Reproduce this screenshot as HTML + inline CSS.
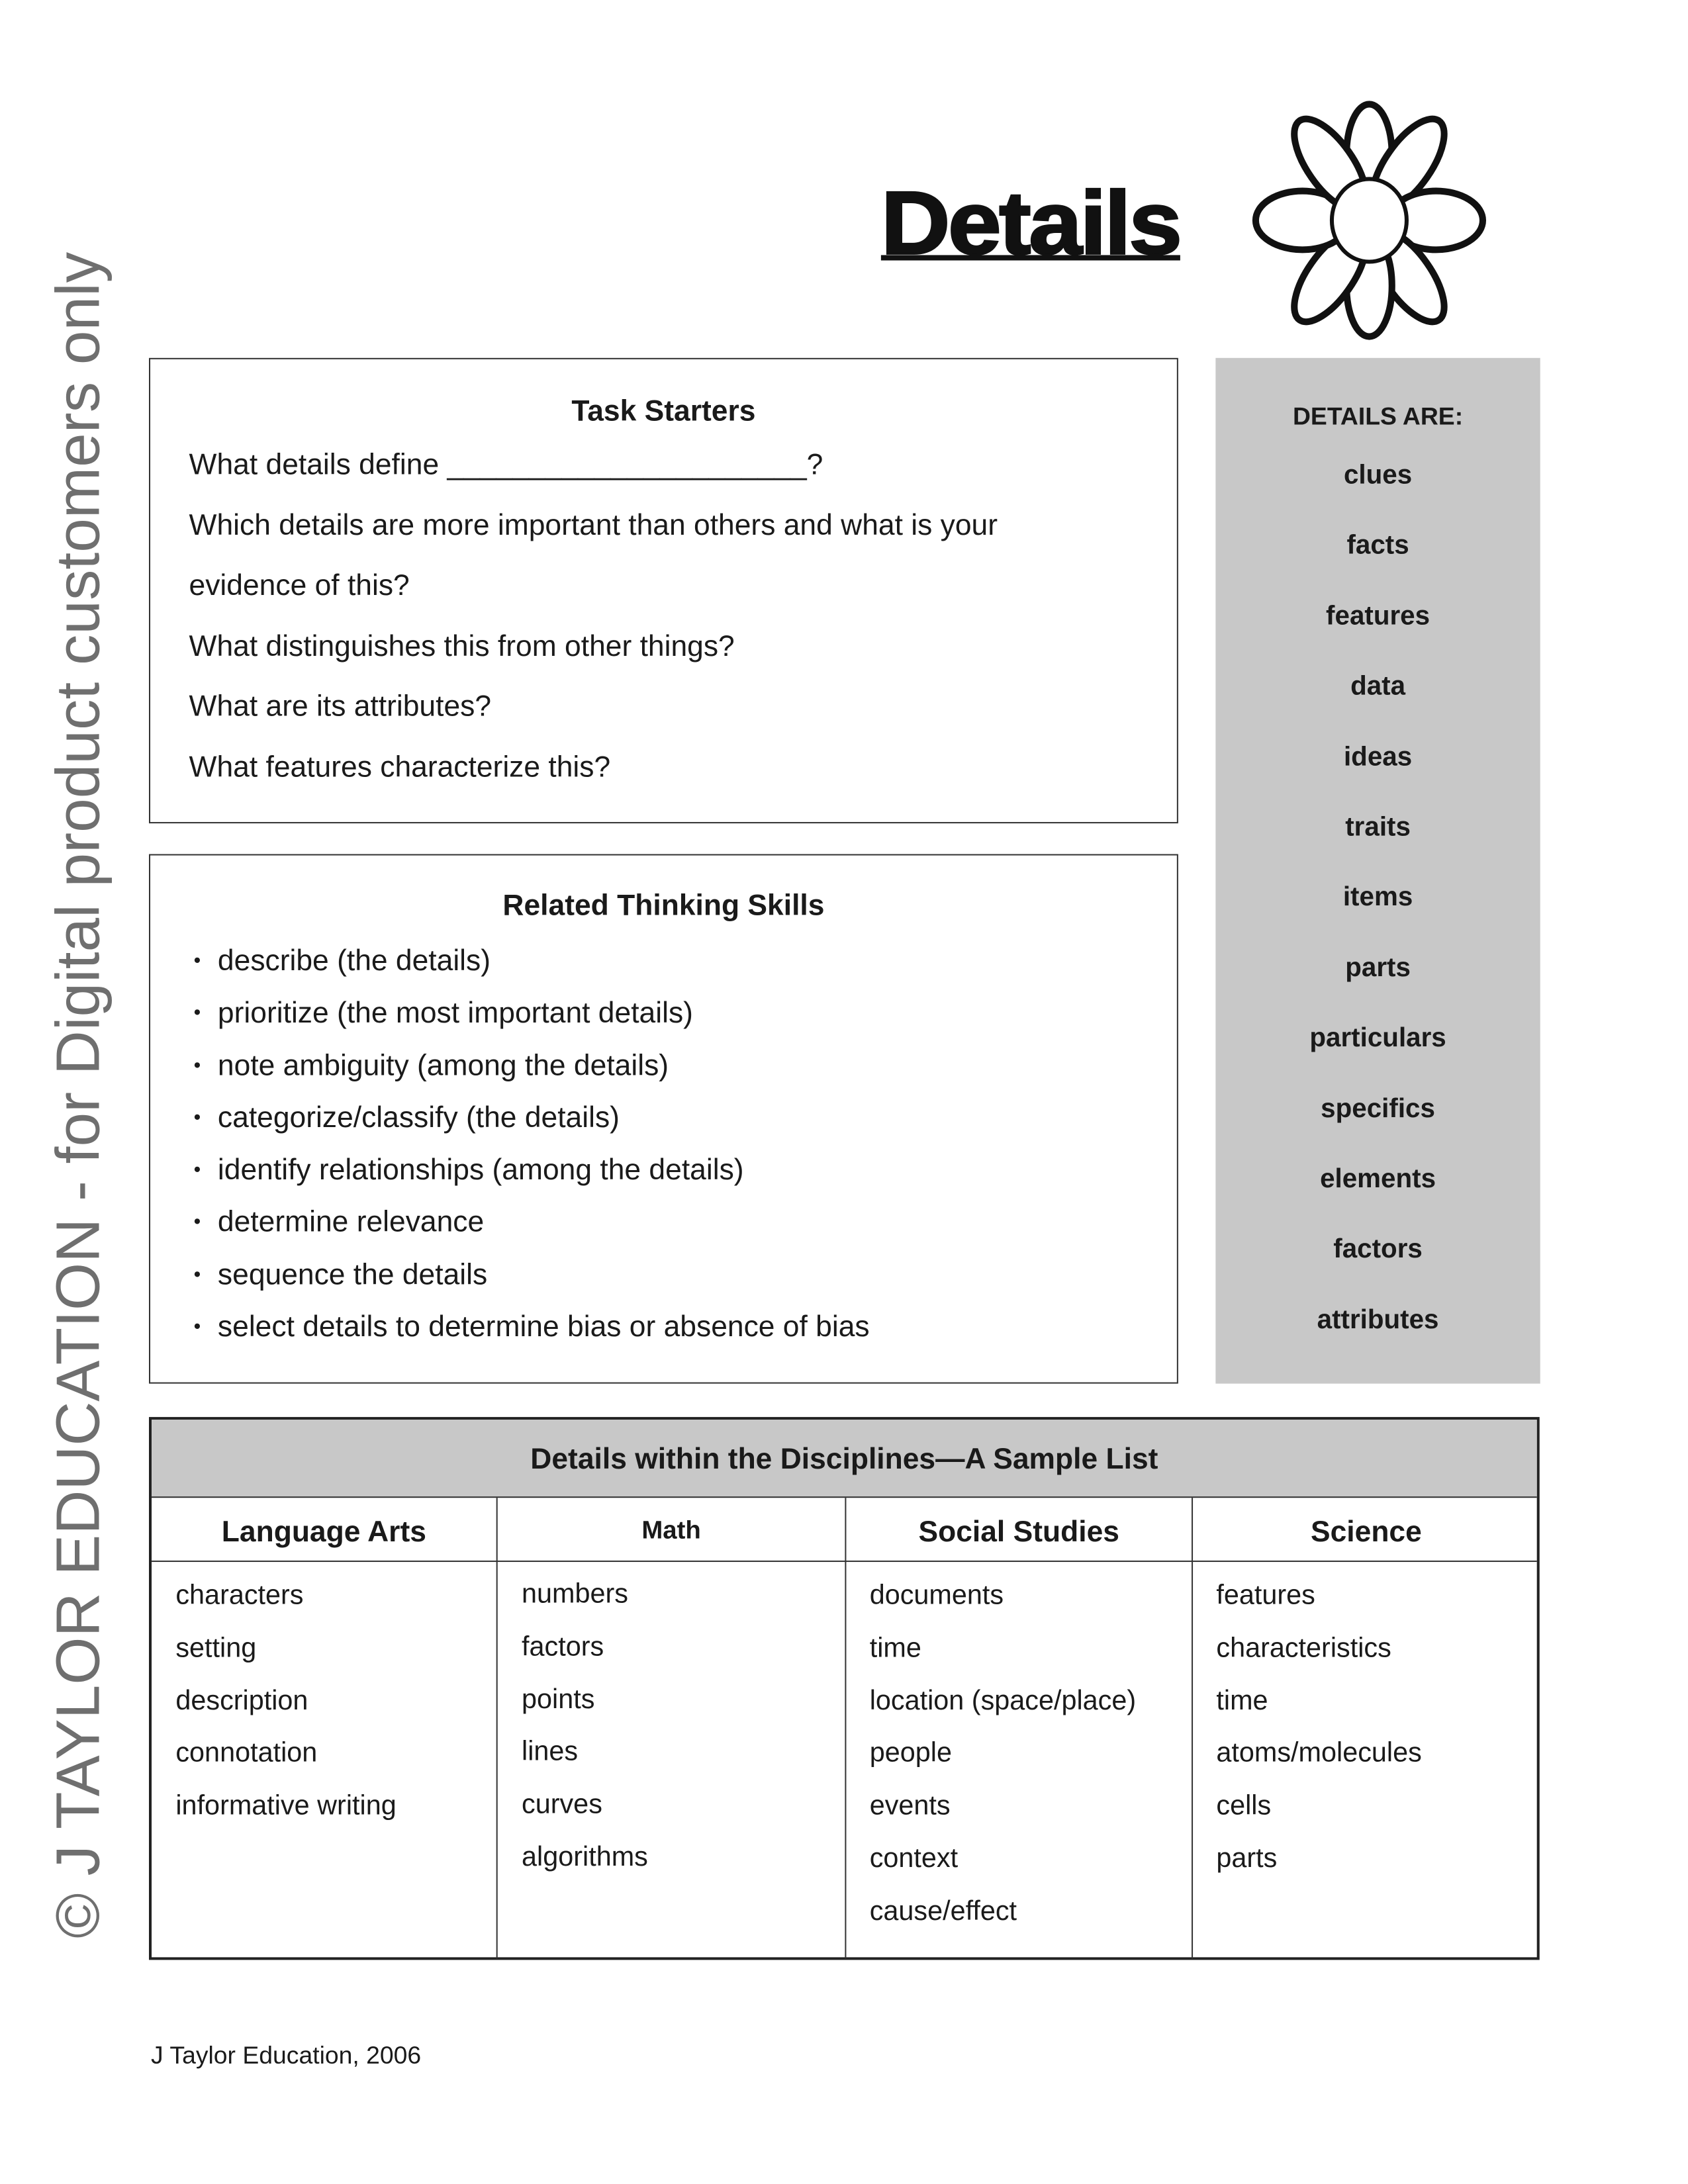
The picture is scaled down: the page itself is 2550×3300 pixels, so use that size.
<!DOCTYPE html>
<html><head><meta charset="utf-8">
<style>
*{margin:0;padding:0;box-sizing:border-box}
html,body{width:2550px;height:3300px;background:#fff;overflow:hidden}
body{position:relative;font-family:"Liberation Sans",sans-serif;color:#1a1a1a}
#w{position:absolute;left:0;top:0;width:2550px;height:3300px;transform:scale(1.009);transform-origin:0 0}
.a{position:absolute;white-space:nowrap;line-height:60px}
.box{position:absolute;border:2px solid #333}
.t{font-size:44px}
.b{font-weight:bold}
.c{text-align:center}
</style></head><body><div id="w">
<div style="position:absolute;left:117px;top:1640px;transform:translate(-50%,-50%) rotate(-90deg);white-space:nowrap;font-size:92px;color:#6f6f6f;line-height:1">© J TAYLOR EDUCATION - for Digital product customers only</div>

<div class="a b" style="left:1319px;top:265px;font-size:134px;line-height:140px;letter-spacing:-3px;color:#111;-webkit-text-stroke:3px #111;transform:scaleX(1.07);transform-origin:left">Details</div>
<div style="position:absolute;left:1319px;top:382px;width:448px;height:8px;background:#111"></div>

<svg style="position:absolute;left:1850px;top:130px" width="400" height="400" viewBox="-200 -200 400 400">
<g fill="#fff" stroke="#111" stroke-width="10">
<ellipse cx="0" cy="-98" rx="34" ry="76"/>
<ellipse cx="0" cy="-102" rx="34" ry="80" transform="rotate(35)"/>
<ellipse cx="0" cy="-100" rx="44" ry="70" transform="rotate(90)"/>
<ellipse cx="0" cy="-102" rx="34" ry="80" transform="rotate(145)"/>
<ellipse cx="0" cy="-98" rx="34" ry="76" transform="rotate(180)"/>
<ellipse cx="0" cy="-102" rx="34" ry="80" transform="rotate(215)"/>
<ellipse cx="0" cy="-100" rx="44" ry="70" transform="rotate(270)"/>
<ellipse cx="0" cy="-102" rx="34" ry="80" transform="rotate(325)"/>
<ellipse cx="0" cy="0" rx="56" ry="62" stroke-width="6"/>
</g></svg>

<div class="box" style="left:223px;top:536px;width:1541px;height:697px"></div>
<div class="a t b c" style="left:223px;top:586px;width:1541px">Task Starters</div>
<div class="a t" style="left:283px;top:666px">What details define ______________________?</div>
<div class="a t" style="left:283px;top:757px">Which details are more important than others and what is your</div>
<div class="a t" style="left:283px;top:847px">evidence of this?</div>
<div class="a t" style="left:283px;top:938px">What distinguishes this from other things?</div>
<div class="a t" style="left:283px;top:1028px">What are its attributes?</div>
<div class="a t" style="left:283px;top:1119px">What features characterize this?</div>

<div class="box" style="left:223px;top:1279px;width:1541px;height:793px"></div>
<div class="a t b c" style="left:223px;top:1326px;width:1541px">Related Thinking Skills</div>
<div style="position:absolute;left:290px;top:1400px;font-size:30px;line-height:78.3px">
•<br>•<br>•<br>•<br>•<br>•<br>•<br>•</div>
<div style="position:absolute;left:326px;top:1400px;font-size:44px;line-height:78.3px;white-space:nowrap">
describe (the details)<br>prioritize (the most important details)<br>note ambiguity (among the details)<br>categorize/classify (the details)<br>identify relationships (among the details)<br>determine relevance<br>sequence the details<br>select details to determine bias or absence of bias</div>

<div style="position:absolute;left:1820px;top:536px;width:486px;height:1536px;background:#c8c8c8"></div>
<div class="a b c" style="left:1820px;top:594px;width:486px;font-size:37px">DETAILS ARE:</div>
<div class="b c" style="position:absolute;left:1820px;top:659px;width:486px;font-size:40px;line-height:105.4px">clues<br>facts<br>features<br>data<br>ideas<br>traits<br>items<br>parts<br>particulars<br>specifics<br>elements<br>factors<br>attributes</div>

<div style="position:absolute;left:223px;top:2122px;width:2082px;height:813px;border:4px solid #222"></div>
<div style="position:absolute;left:227px;top:2126px;width:2074px;height:117px;background:#c8c8c8;border-bottom:2px solid #333"></div>
<div style="position:absolute;left:227px;top:2337px;width:2074px;height:2px;background:#333"></div>
<div style="position:absolute;left:743px;top:2243px;width:2px;height:690px;background:#333"></div>
<div style="position:absolute;left:1265px;top:2243px;width:2px;height:690px;background:#333"></div>
<div style="position:absolute;left:1784px;top:2243px;width:2px;height:690px;background:#333"></div>
<div class="a t b c" style="left:223px;top:2155px;width:2082px">Details within the Disciplines—A Sample List</div>
<div class="a t b c" style="left:227px;top:2264px;width:516px">Language Arts</div>
<div class="a b c" style="left:745px;top:2262px;width:520px;font-size:38px">Math</div>
<div class="a t b c" style="left:1267px;top:2264px;width:517px">Social Studies</div>
<div class="a t b c" style="left:1786px;top:2264px;width:519px">Science</div>
<div style="position:absolute;left:263px;top:2349px;font-size:41px;line-height:78.8px;white-space:nowrap">characters<br>setting<br>description<br>connotation<br>informative writing</div>
<div style="position:absolute;left:781px;top:2347px;font-size:41px;line-height:78.8px;white-space:nowrap">numbers<br>factors<br>points<br>lines<br>curves<br>algorithms</div>
<div style="position:absolute;left:1302px;top:2349px;font-size:41px;line-height:78.8px;white-space:nowrap">documents<br>time<br>location (space/place)<br>people<br>events<br>context<br>cause/effect</div>
<div style="position:absolute;left:1821px;top:2349px;font-size:41px;line-height:78.8px;white-space:nowrap">features<br>characteristics<br>time<br>atoms/molecules<br>cells<br>parts</div>

<div class="a" style="left:226px;top:3048px;font-size:37px">J Taylor Education, 2006</div>
</div></body></html>
